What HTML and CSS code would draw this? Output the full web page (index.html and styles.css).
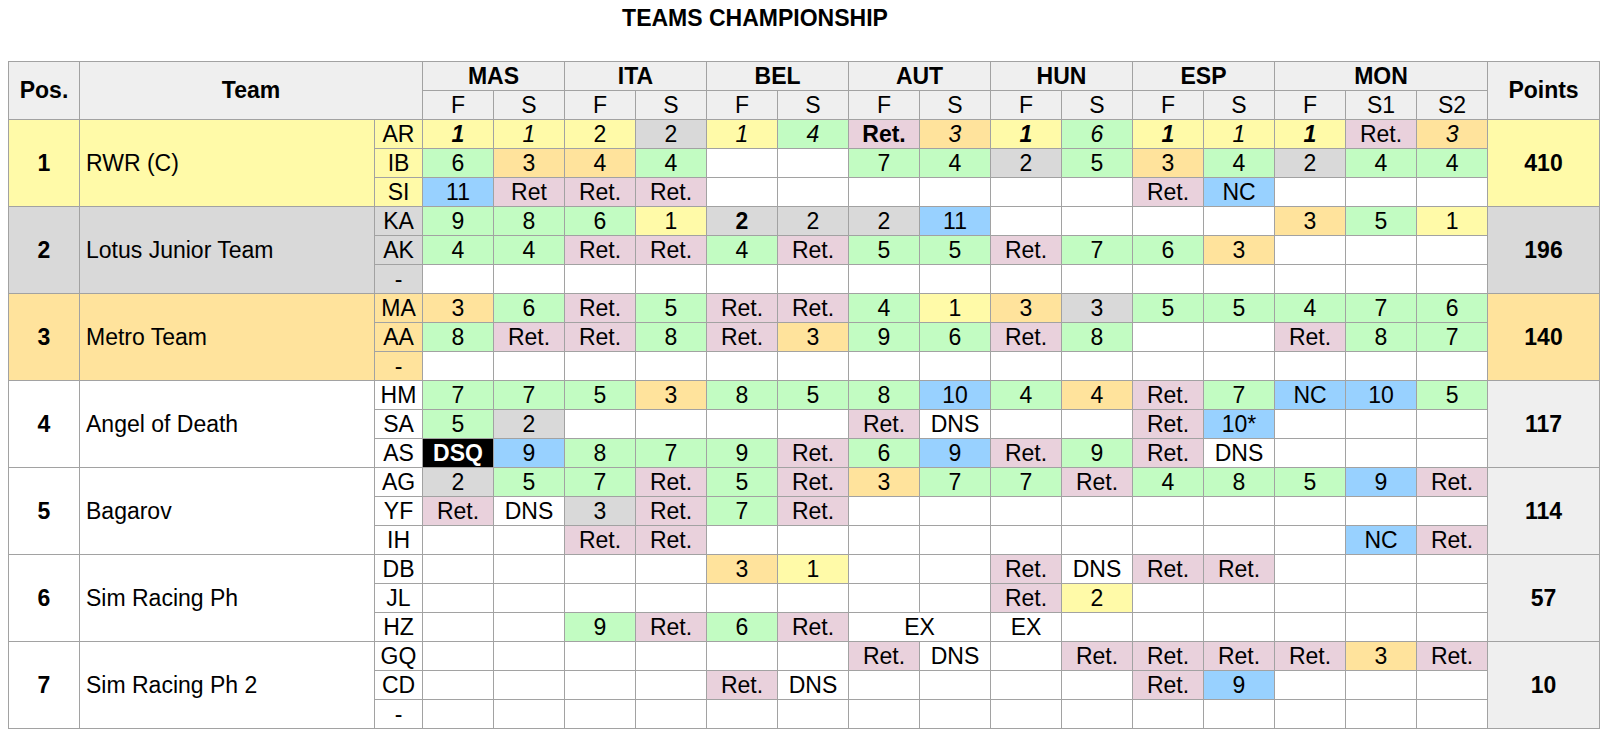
FILE: index.html
```html
<!DOCTYPE html>
<html>
<head>
<meta charset="utf-8">
<title>Teams Championship</title>
<link rel="stylesheet" href="styles.css">
</head>
<body>
<div class="title">TEAMS CHAMPIONSHIP</div>
<table class="standings">
<colgroup>
<col class="c-pos"><col class="c-team"><col class="c-drv">
<col class="c-r"><col class="c-r"><col class="c-r"><col class="c-r"><col class="c-r"><col class="c-r"><col class="c-r"><col class="c-r"><col class="c-r"><col class="c-r"><col class="c-r"><col class="c-r"><col class="c-r"><col class="c-r"><col class="c-r">
<col class="c-pts">
</colgroup>
<thead>
<tr>
<th rowspan="2">Pos.</th><th rowspan="2" colspan="2">Team</th>
<th colspan="2">MAS</th><th colspan="2">ITA</th><th colspan="2">BEL</th><th colspan="2">AUT</th><th colspan="2">HUN</th><th colspan="2">ESP</th><th colspan="3">MON</th>
<th rowspan="2">Points</th>
</tr>
<tr class="sub">
<th>F</th><th>S</th><th>F</th><th>S</th><th>F</th><th>S</th><th>F</th><th>S</th><th>F</th><th>S</th><th>F</th><th>S</th><th>F</th><th>S1</th><th>S2</th>
</tr>
</thead>
<tbody>
<!-- 1 -->
<tr>
<td rowspan="3" class="pos y">1</td><td rowspan="3" class="team y">RWR (C)</td><td class="drv y">AR</td>
<td class="y b i">1</td><td class="y i">1</td><td class="y">2</td><td class="s">2</td><td class="y i">1</td><td class="g i">4</td><td class="p b">Ret.</td><td class="o i">3</td><td class="y b i">1</td><td class="g i">6</td><td class="y b i">1</td><td class="y i">1</td><td class="y b i">1</td><td class="p">Ret.</td><td class="o i">3</td>
<td rowspan="3" class="pts y">410</td>
</tr>
<tr>
<td class="drv y">IB</td>
<td class="g">6</td><td class="o">3</td><td class="o">4</td><td class="g">4</td><td></td><td></td><td class="g">7</td><td class="g">4</td><td class="s">2</td><td class="g">5</td><td class="o">3</td><td class="g">4</td><td class="s">2</td><td class="g">4</td><td class="g">4</td>
</tr>
<tr>
<td class="drv y">SI</td>
<td class="bl">11</td><td class="p">Ret</td><td class="p">Ret.</td><td class="p">Ret.</td><td></td><td></td><td></td><td></td><td></td><td></td><td class="p">Ret.</td><td class="bl">NC</td><td></td><td></td><td></td>
</tr>
<!-- 2 -->
<tr>
<td rowspan="3" class="pos s">2</td><td rowspan="3" class="team s">Lotus Junior Team</td><td class="drv s">KA</td>
<td class="g">9</td><td class="g">8</td><td class="g">6</td><td class="y">1</td><td class="s b">2</td><td class="s">2</td><td class="s">2</td><td class="bl">11</td><td></td><td></td><td></td><td></td><td class="o">3</td><td class="g">5</td><td class="y">1</td>
<td rowspan="3" class="pts s">196</td>
</tr>
<tr>
<td class="drv s">AK</td>
<td class="g">4</td><td class="g">4</td><td class="p">Ret.</td><td class="p">Ret.</td><td class="g">4</td><td class="p">Ret.</td><td class="g">5</td><td class="g">5</td><td class="p">Ret.</td><td class="g">7</td><td class="g">6</td><td class="o">3</td><td></td><td></td><td></td>
</tr>
<tr>
<td class="drv s">-</td>
<td></td><td></td><td></td><td></td><td></td><td></td><td></td><td></td><td></td><td></td><td></td><td></td><td></td><td></td><td></td>
</tr>
<!-- 3 -->
<tr>
<td rowspan="3" class="pos o">3</td><td rowspan="3" class="team o">Metro Team</td><td class="drv o">MA</td>
<td class="o">3</td><td class="g">6</td><td class="p">Ret.</td><td class="g">5</td><td class="p">Ret.</td><td class="p">Ret.</td><td class="g">4</td><td class="y">1</td><td class="o">3</td><td class="s">3</td><td class="g">5</td><td class="g">5</td><td class="g">4</td><td class="g">7</td><td class="g">6</td>
<td rowspan="3" class="pts o">140</td>
</tr>
<tr>
<td class="drv o">AA</td>
<td class="g">8</td><td class="p">Ret.</td><td class="p">Ret.</td><td class="g">8</td><td class="p">Ret.</td><td class="o">3</td><td class="g">9</td><td class="g">6</td><td class="p">Ret.</td><td class="g">8</td><td></td><td></td><td class="p">Ret.</td><td class="g">8</td><td class="g">7</td>
</tr>
<tr>
<td class="drv o">-</td>
<td></td><td></td><td></td><td></td><td></td><td></td><td></td><td></td><td></td><td></td><td></td><td></td><td></td><td></td><td></td>
</tr>
<!-- 4 -->
<tr>
<td rowspan="3" class="pos">4</td><td rowspan="3" class="team">Angel of Death</td><td class="drv">HM</td>
<td class="g">7</td><td class="g">7</td><td class="g">5</td><td class="o">3</td><td class="g">8</td><td class="g">5</td><td class="g">8</td><td class="bl">10</td><td class="g">4</td><td class="o">4</td><td class="p">Ret.</td><td class="g">7</td><td class="bl">NC</td><td class="bl">10</td><td class="g">5</td>
<td rowspan="3" class="pts">117</td>
</tr>
<tr>
<td class="drv">SA</td>
<td class="g">5</td><td class="s">2</td><td></td><td></td><td></td><td></td><td class="p">Ret.</td><td>DNS</td><td></td><td></td><td class="p">Ret.</td><td class="bl">10*</td><td></td><td></td><td></td>
</tr>
<tr>
<td class="drv">AS</td>
<td class="k">DSQ</td><td class="bl">9</td><td class="g">8</td><td class="g">7</td><td class="g">9</td><td class="p">Ret.</td><td class="g">6</td><td class="bl">9</td><td class="p">Ret.</td><td class="g">9</td><td class="p">Ret.</td><td>DNS</td><td></td><td></td><td></td>
</tr>
<!-- 5 -->
<tr>
<td rowspan="3" class="pos">5</td><td rowspan="3" class="team">Bagarov</td><td class="drv">AG</td>
<td class="s">2</td><td class="g">5</td><td class="g">7</td><td class="p">Ret.</td><td class="g">5</td><td class="p">Ret.</td><td class="o">3</td><td class="g">7</td><td class="g">7</td><td class="p">Ret.</td><td class="g">4</td><td class="g">8</td><td class="g">5</td><td class="bl">9</td><td class="p">Ret.</td>
<td rowspan="3" class="pts">114</td>
</tr>
<tr>
<td class="drv">YF</td>
<td class="p">Ret.</td><td>DNS</td><td class="s">3</td><td class="p">Ret.</td><td class="g">7</td><td class="p">Ret.</td><td></td><td></td><td></td><td></td><td></td><td></td><td></td><td></td><td></td>
</tr>
<tr>
<td class="drv">IH</td>
<td></td><td></td><td class="p">Ret.</td><td class="p">Ret.</td><td></td><td></td><td></td><td></td><td></td><td></td><td></td><td></td><td></td><td class="bl">NC</td><td class="p">Ret.</td>
</tr>
<!-- 6 -->
<tr>
<td rowspan="3" class="pos">6</td><td rowspan="3" class="team">Sim Racing Ph</td><td class="drv">DB</td>
<td></td><td></td><td></td><td></td><td class="o">3</td><td class="y">1</td><td></td><td></td><td class="p">Ret.</td><td>DNS</td><td class="p">Ret.</td><td class="p">Ret.</td><td></td><td></td><td></td>
<td rowspan="3" class="pts">57</td>
</tr>
<tr>
<td class="drv">JL</td>
<td></td><td></td><td></td><td></td><td></td><td></td><td></td><td></td><td class="p">Ret.</td><td class="y">2</td><td></td><td></td><td></td><td></td><td></td>
</tr>
<tr>
<td class="drv">HZ</td>
<td></td><td></td><td class="g">9</td><td class="p">Ret.</td><td class="g">6</td><td class="p">Ret.</td><td colspan="2">EX</td><td>EX</td><td></td><td></td><td></td><td></td><td></td><td></td>
</tr>
<!-- 7 -->
<tr>
<td rowspan="3" class="pos">7</td><td rowspan="3" class="team">Sim Racing Ph 2</td><td class="drv">GQ</td>
<td></td><td></td><td></td><td></td><td></td><td></td><td class="p">Ret.</td><td>DNS</td><td></td><td class="p">Ret.</td><td class="p">Ret.</td><td class="p">Ret.</td><td class="p">Ret.</td><td class="o">3</td><td class="p">Ret.</td>
<td rowspan="3" class="pts">10</td>
</tr>
<tr>
<td class="drv">CD</td>
<td></td><td></td><td></td><td></td><td class="p">Ret.</td><td>DNS</td><td></td><td></td><td></td><td></td><td class="p">Ret.</td><td class="bl">9</td><td></td><td></td><td></td>
</tr>
<tr>
<td class="drv">-</td>
<td></td><td></td><td></td><td></td><td></td><td></td><td></td><td></td><td></td><td></td><td></td><td></td><td></td><td></td><td></td>
</tr>
</tbody>
</table>
</body>
</html>
```

FILE: styles.css
```css
html, body {
  margin: 0;
  padding: 0;
  background: #ffffff;
}
body {
  padding: 0 8px;
  font-family: "Liberation Sans", Arial, sans-serif;
  font-size: 23px;
  color: #000;
}
.title {
  padding-top: 4.5px;
  padding-right: 98px;
  height: 26px;
  line-height: 26px;
  text-align: center;
  font-weight: bold;
  margin-bottom: 30px;
}
.standings {
  width: 100%;
  border-collapse: collapse;
  table-layout: fixed;
}
.c-pos { width: 71px; }
.c-team { width: 295px; }
.c-drv { width: 48px; }
.c-r { width: 71px; }
.c-pts { width: auto; }
.standings th,
.standings td {
  border: 1px solid #a2a2a2;
  padding: 1px 2px;
  line-height: 26px;
  height: 26px;
  text-align: center;
  white-space: nowrap;
  overflow: hidden;
}
.standings th {
  background: #efefef;
  font-weight: bold;
}
.standings tr.sub th {
  font-weight: normal;
}
.standings td.pos,
.standings td.pts {
  font-weight: bold;
}
.standings td.team {
  text-align: left;
  padding-left: 6px;
}
.standings td.pts {
  background: #efefef;
}
.standings td.y { background: #fffaa8; }
.standings td.s { background: #d9d9d9; }
.standings td.o { background: #ffe39c; }
.standings td.g { background: #c2fcc2; }
.standings td.bl { background: #98d1ff; }
.standings td.p { background: #e9d1dc; }
.standings td.k { background: #000; color: #fff; font-weight: bold; }
.standings td.b { font-weight: bold; }
.standings td.i { font-style: italic; }
```
